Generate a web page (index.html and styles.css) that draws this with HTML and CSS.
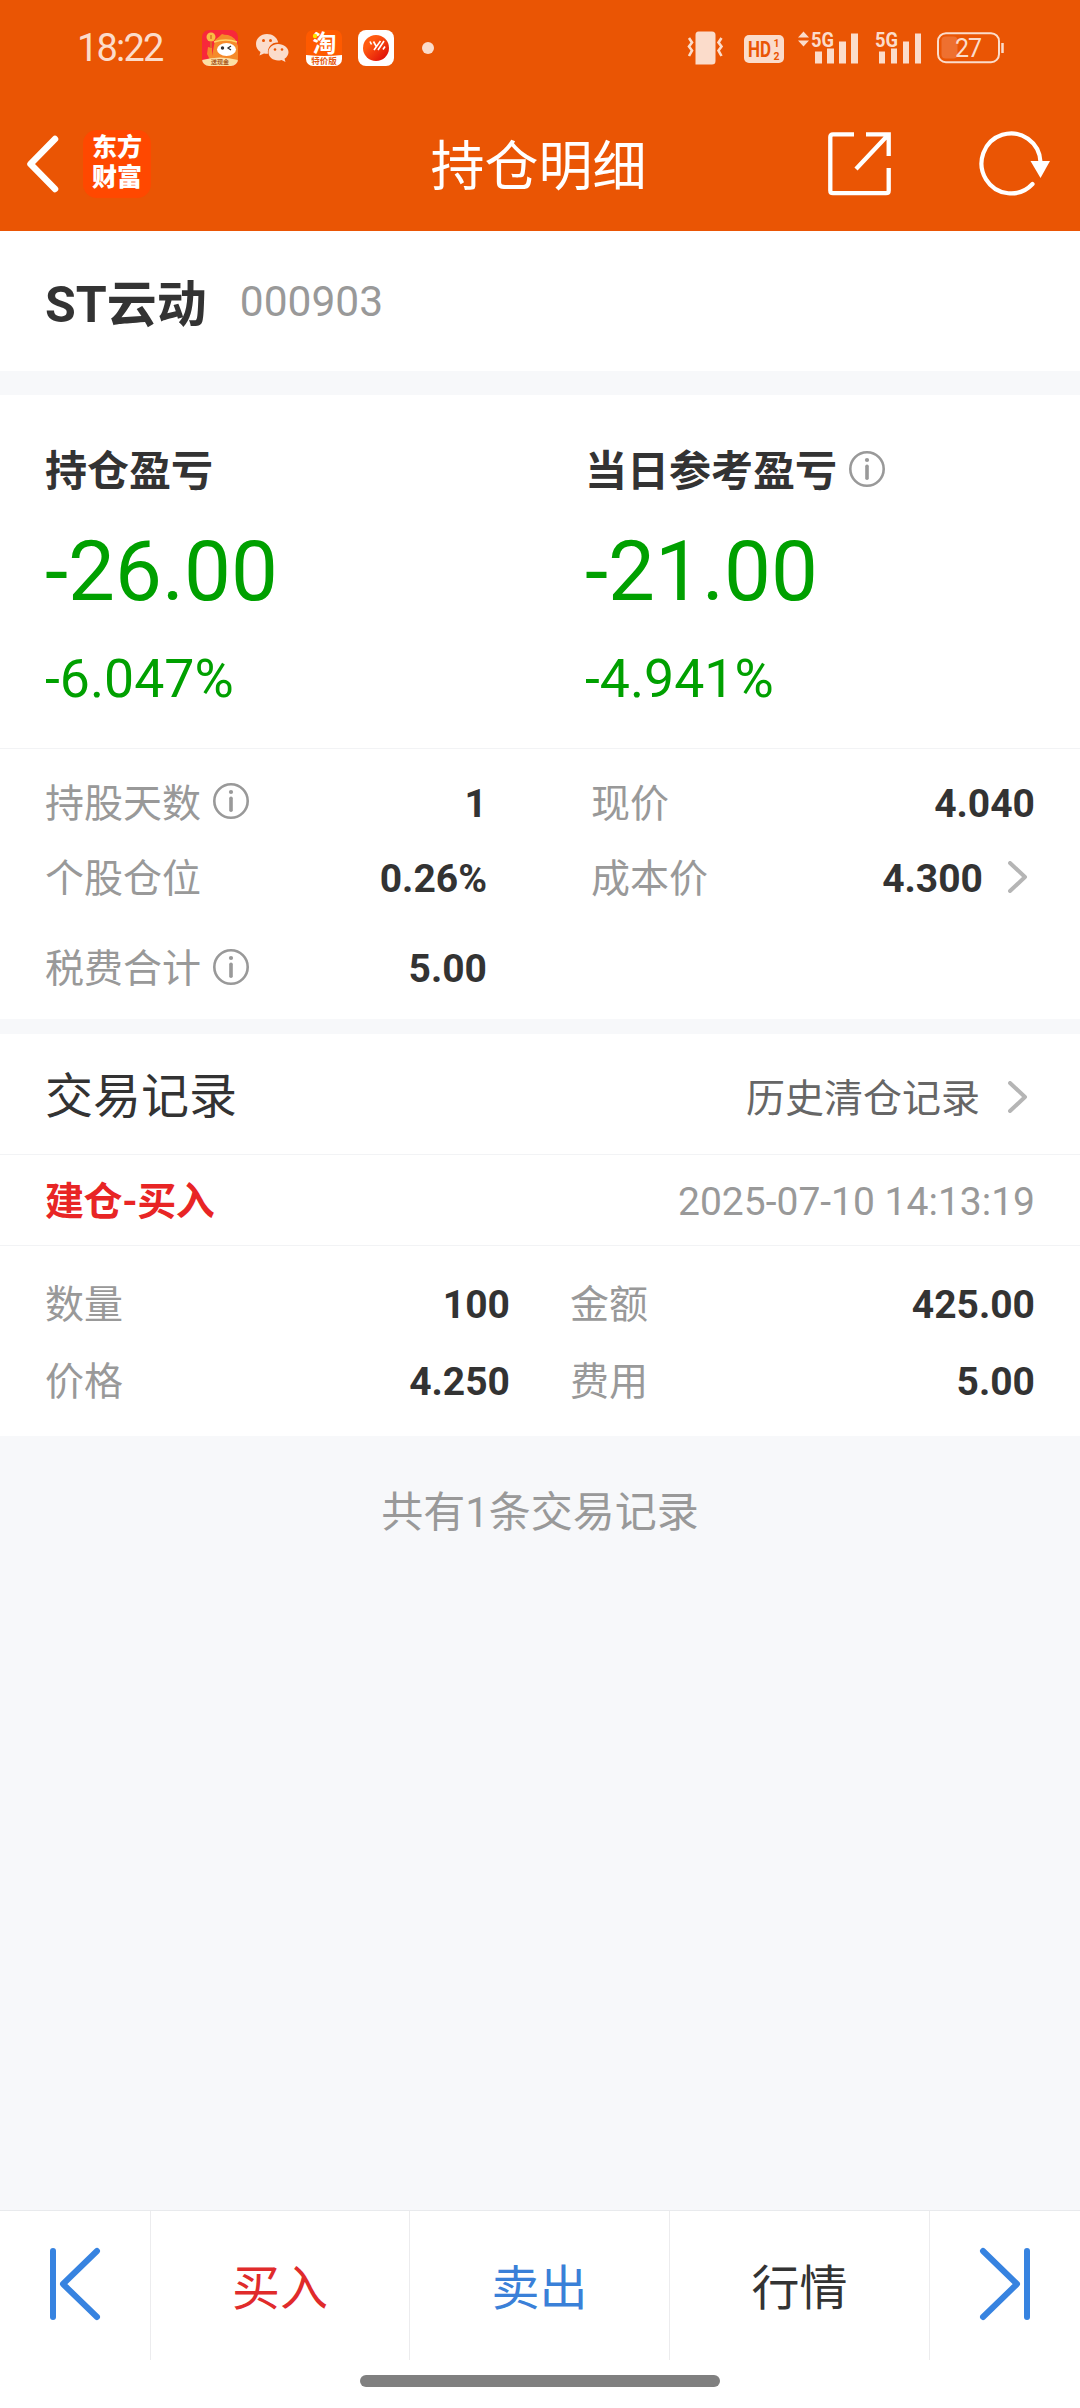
FILE: index.html
```html
<!DOCTYPE html>
<html lang="zh-CN">
<head>
    <meta charset="UTF-8">
    <meta name="viewport" content="width=device-width, initial-scale=1.0">
    <title>持仓明细</title>
    <link rel="stylesheet" href="styles.css">
</head>
<body>
    <!-- shared icons -->
    <svg class="sprite">
        <symbol id="info" viewBox="0 0 36 36">
            <circle cx="18" cy="18" r="16.7" fill="none" stroke="#999" stroke-width="2.6"/>
            <circle cx="18" cy="9" r="2.1" fill="#999"/>
            <path d="M18 15.2v12" stroke="#999" stroke-width="3.6" stroke-linecap="round"/>
        </symbol>
        <symbol id="arrow" viewBox="0 0 20 32">
            <path d="M2 2l15 14L2 30" fill="none" stroke="#b5b5b5" stroke-width="4" stroke-linecap="round" stroke-linejoin="round"/>
        </symbol>
    </svg>

    <div class="status-bar">
        <span class="time">18:22</span>
        <div class="notices">
            <svg width="36" height="36" viewBox="0 0 36 36">
                <defs><clipPath id="round"><rect width="36" height="36" rx="7"/></clipPath></defs>
                <g clip-path="url(#round)">
                    <rect width="36" height="36" fill="#f8283a"/>
                    <path d="M13 10q4-3 7-6q2 1 6 1q8 2 10 11v16H9l-4-8l1-7l4 1v8z" fill="#f58a2a"/>
                    <circle cx="9" cy="7" r="4.5" fill="#f8bd43"/>
                    <path d="M9 5v4M9 12v6" stroke="#d8742a" stroke-width="1.5"/>
                    <path d="M12 12q12-4 23 0" fill="none" stroke="#ffd36a" stroke-width="1.5"/>
                    <ellipse cx="24.5" cy="19.5" rx="9.5" ry="6.5" fill="#fff"/>
                    <circle cx="20.5" cy="18" r="1.7" fill="#333"/>
                    <path d="M29 16l-3 2l3 2" fill="none" stroke="#333" stroke-width="1.3"/>
                    <path d="M0 30q18-5 36 0v6H0z" fill="#fce0a4"/>
                    <text x="18" y="34" class="app-tiny">送现金</text>
                </g>
            </svg>
            <svg width="34" height="30" viewBox="0 0 34 30">
                <path d="M12 1C5.5 1 1 5.500 1 11c0 3.500 1.600 6 4.500 8L4.500 22.500L9 20.500q2 .5 4 .3C12 14 17 9 23.200 9.500C22 4 17.500 1 12 1z" fill="#fbdccb"/>
                <path d="M23 11c-5.500 0-9.500 3.700-9.500 8.300c0 5 4.500 8.200 9.500 8.200q2 0 3.500-.6l4 2l-1-3.200c2.500-1.700 4-3.900 4-6.500C33.500 14.700 29 11 23 11z" fill="#fbdccb"/>
                <g fill="#ea5504"><circle cx="8.5" cy="7.5" r="1.5"/><circle cx="15.5" cy="7.5" r="1.5"/><circle cx="20" cy="16.5" r="1.3"/><circle cx="27" cy="16.5" r="1.3"/></g>
            </svg>
            <svg width="36" height="36" viewBox="0 0 36 36">
                <g clip-path="url(#round)">
                    <rect width="36" height="36" fill="#ff5a00"/>
                    <text x="18.5" y="22" class="app-main">淘</text>
                    <circle cx="9" cy="6" r="2.2" fill="#ffe600"/>
                    <path d="M0 25q18 2 36 0v11H0z" fill="#fff"/>
                    <text x="18" y="34" class="app-sub">特价版</text>
                </g>
            </svg>
            <svg class="app-ball" width="36" height="36" viewBox="0 0 36 36">
                <defs><linearGradient id="ball" x1="0" y1="0" x2="1" y2="1"><stop offset=".3" stop-color="#ff5a10"/><stop offset="1" stop-color="#d90008"/></linearGradient></defs>
                <rect width="36" height="36" rx="8" fill="#fff"/>
                <circle cx="18" cy="18" r="13" fill="url(#ball)"/>
                <path d="M12 11.500l1.500 3M15.500 11.500l2.500 4.500M16 20l6.500-9M20 20l6-9M25 19.500l2-3" stroke="#fff" stroke-width="1.6"/>
            </svg>
            <span class="dot"></span>
        </div>
        <div class="signals">
            <svg width="37" height="34" viewBox="0 0 37 34">
                <path d="M11 .5h14q3.500 0 3.500 3.500v26q0 3.500-3.500 3.500H8.500V4q0-3.500 3-3.500z" fill="#fbdccb"/>
                <path d="M2 7l3 4.500L2 15.500l3 4L2 25M34.500 7l-3 4.500l3 4l-3 4l3 5.500" fill="none" stroke="#fbdccb" stroke-width="2.6"/>
            </svg>
            <svg class="hd" width="40" height="28" viewBox="0 0 40 28">
                <rect width="40" height="28" rx="5" fill="#fbdccb"/>
                <text x="4" y="21.5" class="hd-text" textLength="23" lengthAdjust="spacingAndGlyphs">HD</text>
                <text x="29.5" y="12.4" class="hd-num">1</text>
                <text x="29.5" y="24.6" class="hd-num">2</text>
            </svg>
            <svg class="net" width="62" height="34" viewBox="0 0 62 34">
                <path d="M0 6.500l5.500-6l5.500 6zM0 9.500h11l-5.500 6z" fill="#fbdccb"/>
                <text x="13" y="16" class="net-text" textLength="23" lengthAdjust="spacingAndGlyphs">5G</text>
                <path d="M17 20.500h7v12h-7zM29 17.500h7v15h-7zM41 10.500h7v22h-7zM53 2.500h7v30h-7z" fill="#fbdccb"/>
            </svg>
            <svg class="net2" width="47" height="34" viewBox="0 0 47 34">
                <text x="0" y="16" class="net-text" textLength="23" lengthAdjust="spacingAndGlyphs">5G</text>
                <path d="M4 20.500h6v12H4zM16 17.500h6v15h-6zM28 10.500h6v22h-6zM40 2.500h6v30h-6z" fill="#fbdccb"/>
            </svg>
            <svg class="battery" width="68" height="32" viewBox="0 0 68 32">
                <rect x="1" y="1.2" width="61" height="29" rx="8" fill="none" stroke="#fbdccb" stroke-width="2"/>
                <rect x="4.5" y="4.5" width="16" height="22" rx="4" fill="#ee7030"/>
                <path d="M65.500 11v10" stroke="#fbdccb" stroke-width="2.5"/>
                <text x="18" y="25" class="battery-text">27</text>
            </svg>
        </div>
    </div>

    <div class="header">
        <div class="header-left">
            <svg width="34" height="58" viewBox="0 0 34 58">
                <path d="M30 4L5.500 29L30 54" fill="none" stroke="#fff" stroke-width="6.5" stroke-linecap="round" stroke-linejoin="round"/>
            </svg>
            <div class="logo">东方<br>财富</div>
        </div>
        <h1>持仓明细</h1>
        <div class="header-right">
            <svg width="64" height="64" viewBox="0 0 64 64">
                <path d="M26 2.300H5q-2.700 0-2.700 2.700v53.500q0 2.700 2.700 2.700h53q2.700 0 2.700-2.700V36M38 2.300h22.700V24M60 3L28 37" fill="none" stroke="#fff" stroke-width="4.3"/>
            </svg>
            <svg width="72" height="66" viewBox="0 0 72 66">
                <path d="M61.500 31A29.500 30 0 1 0 53.500 53" fill="none" stroke="#fff" stroke-width="4.2" stroke-linecap="round"/>
                <path d="M51.500 30h19.500l-9.500 17z" fill="#fff"/>
            </svg>
        </div>
    </div>

    <div class="stock">
        <span class="stock-name">ST云动</span>
        <span class="stock-code">000903</span>
    </div>

    <div class="profit">
        <div class="profit-item">
            <div class="profit-title">持仓盈亏</div>
            <div class="profit-num">-26.00</div>
            <div class="profit-rate">-6.047%</div>
        </div>
        <div class="profit-item">
            <div class="profit-title">当日参考盈亏<svg class="info"><use href="#info"/></svg></div>
            <div class="profit-num">-21.00</div>
            <div class="profit-rate">-4.941%</div>
        </div>
    </div>

    <div class="details">
        <div class="cell"><span class="label">持股天数<svg class="info"><use href="#info"/></svg></span><b>1</b></div>
        <div class="cell"><span class="label">现价</span><b>4.040</b></div>
        <div class="cell"><span class="label">个股仓位</span><b>0.26%</b></div>
        <div class="cell"><span class="label">成本价</span><b class="push">4.300</b><svg class="arrow"><use href="#arrow"/></svg></div>
        <div class="cell"><span class="label">税费合计<svg class="info"><use href="#info"/></svg></span><b>5.00</b></div>
    </div>

    <div class="records-head">
        <h2>交易记录</h2>
        <span class="history">历史清仓记录</span>
        <svg class="arrow"><use href="#arrow"/></svg>
    </div>
    <div class="record-top">
        <span class="record-type">建仓-买入</span>
        <span class="record-time">2025-07-10 14:13:19</span>
    </div>
    <div class="record">
        <div class="cell"><span class="label">数量</span><b>100</b></div>
        <div class="cell"><span class="label">金额</span><b>425.00</b></div>
        <div class="cell"><span class="label">价格</span><b>4.250</b></div>
        <div class="cell"><span class="label">费用</span><b>5.00</b></div>
    </div>
    <p class="total">共有1条交易记录</p>

    <div class="footer">
        <div class="tabs">
            <a class="tab">
                <svg width="52" height="72" viewBox="0 0 52 72">
                    <path d="M4 3v66" class="nav-line"/>
                    <path d="M48 3L14 36l34 33" class="nav-line"/>
                </svg>
            </a>
            <a class="tab buy">买入</a>
            <a class="tab sell">卖出</a>
            <a class="tab">行情</a>
            <a class="tab">
                <svg width="52" height="72" viewBox="0 0 52 72">
                    <path d="M48 3v66" class="nav-line"/>
                    <path d="M4 3l34 33L4 69" class="nav-line"/>
                </svg>
            </a>
        </div>
        <div class="home-bar"></div>
    </div>
</body>
</html>
```

FILE: styles.css
```css
* {
    box-sizing: border-box;
}
body {
    margin: 0;
    height: 2408px;
    display: flex;
    flex-direction: column;
    background: #f7f8fa;
    color: #333;
    font-family: Roboto, "Noto Sans CJK SC", sans-serif;
    font-size: 39px;
    line-height: 46px;
    overflow: hidden;
}
svg {
    display: block;
    flex: none;
    overflow: visible;
}
.sprite {
    width: 0;
    height: 0;
    position: absolute;
}

/* status bar */
.status-bar {
    height: 96px;
    padding: 0 75px 0 77px;
    display: flex;
    align-items: center;
    background: #ea5504;
}
.time {
    width: 125px;
    color: #fbdccb;
    font-size: 38px;
    letter-spacing: -1.8px;
}
.notices {
    display: flex;
    align-items: center;
    gap: 17px;
}
.app-ball {
    margin-left: -1px;
}
.dot {
    width: 12px;
    height: 12px;
    margin-left: 11px;
    border-radius: 50%;
    background: #fbdccb;
}
.signals {
    margin-left: auto;
    display: flex;
    align-items: center;
}
.hd {
    margin-left: 20px;
    margin-top: 2px;
}
.net {
    margin-left: 14px;
}
.net2 {
    margin-left: 15px;
}
.battery {
    margin-left: 15px;
}
.app-tiny {
    font-size: 6px;
    font-weight: bold;
    fill: #a8581c;
    text-anchor: middle;
}
.app-main {
    font-size: 24px;
    font-weight: bold;
    fill: #fff;
    text-anchor: middle;
}
.app-sub {
    font-size: 8.5px;
    font-weight: bold;
    fill: #e65a10;
    text-anchor: middle;
}
.hd-text {
    font-size: 22px;
    font-weight: bold;
    fill: #ea5504;
}
.hd-num {
    font-size: 10.5px;
    font-weight: bold;
    fill: #ea5504;
}
.net-text {
    font-size: 20px;
    font-weight: bold;
    fill: #fbdccb;
}
.battery-text {
    font-size: 25px;
    letter-spacing: -1px;
    fill: #fbdccb;
}

/* header */
.header {
    height: 135px;
    display: flex;
    align-items: center;
    background: #ea5504;
    color: #fff;
}
.header-left,
.header-right {
    width: 270px;
    display: flex;
    align-items: center;
}
.header-left {
    padding-left: 25px;
    gap: 24px;
}
.header-right {
    padding-left: 18px;
    gap: 87px;
}
.header h1 {
    flex: 1;
    margin: 8px 3px 0 0;
    font-size: 54px;
    font-weight: normal;
    line-height: 64px;
    text-align: center;
}
.logo {
    width: 68px;
    height: 68px;
    padding-top: 3px;
    border-radius: 14px;
    background: #ff4800;
    font-size: 25px;
    font-weight: 900;
    line-height: 30px;
    text-align: center;
}

/* stock name */
.stock {
    height: 140px;
    padding: 2px 45px 0;
    display: flex;
    align-items: center;
    background: #fff;
}
.stock-name {
    font-size: 50px;
    font-weight: bold;
    line-height: 60px;
    padding-top: 5px;
}
.stock-code {
    margin-left: 33px;
    color: #999;
    font-size: 42.5px;
}

/* profit */
.profit {
    height: 354px;
    margin-top: 24px;
    padding: 45px 0 0 45px;
    display: grid;
    grid-template-columns: 540px 1fr;
    background: #fff;
    border-bottom: 1px solid #f2f3f5;
}
.profit-title {
    display: flex;
    align-items: center;
    font-size: 42px;
    font-weight: bold;
    line-height: 64px;
}
.info {
    width: 36px;
    height: 36px;
    margin: 0 0 7px 12px;
}
.profit-num,
.profit-rate {
    color: #00a000;
}
.profit-num {
    font-size: 83.5px;
    line-height: 136px;
}
.profit-rate {
    font-size: 53.6px;
    line-height: 77px;
}

/* details */
.details {
    height: 270px;
    padding: 17px 45px 0;
    display: grid;
    grid-template-columns: 442px 444px;
    grid-template-rows: 75px 75px 106px;
    column-gap: 104px;
    background: #fff;
}
.cell {
    display: flex;
    align-items: center;
    justify-content: space-between;
}
.label {
    display: flex;
    align-items: center;
    color: #999;
}
.label .info {
    margin-bottom: 5px;
}
.push {
    margin-left: auto;
}
.arrow {
    width: 20px;
    height: 32px;
    margin: 0 7px 4px 25px;
}

/* records */
.records-head,
.record-top {
    padding: 0 45px;
    display: flex;
    align-items: center;
    background: #fff;
    border-bottom: 1px solid #f2f3f5;
}
.records-head {
    height: 121px;
    margin-top: 15px;
    padding-top: 5px;
}
.records-head h2 {
    margin: 0 auto 0 0;
    font-size: 48px;
    font-weight: normal;
}
.history {
    padding-top: 5px;
    color: #666;
}
.records-head .arrow {
    margin: 0 7px 0 28px;
}
.record-top {
    height: 91px;
    padding-top: 3px;
    justify-content: space-between;
}
.record-type {
    color: #e82525;
    font-weight: bold;
    letter-spacing: -.4px;
}
.record-time {
    color: #999;
}
.record {
    height: 190px;
    padding: 20px 45px 0;
    display: grid;
    grid-template-columns: 465px 465px;
    grid-template-rows: 77px 77px;
    column-gap: 60px;
    background: #fff;
}
.total {
    margin: 45px 0 0;
    color: #999;
    font-size: 42px;
    line-height: 64px;
    text-align: center;
}

/* footer */
.footer {
    height: 198px;
    margin-top: auto;
    background: #fff;
    border-top: 1px solid #e8eaed;
}
.tabs {
    height: 149px;
    display: grid;
    grid-template-columns: 151px 259px 260px 260px 150px;
}
.tab {
    display: flex;
    align-items: center;
    justify-content: center;
    padding-top: 6px;
    font-size: 48px;
    border-right: 1px solid #ececee;
}
.tab:last-child {
    border-right: 0;
}
.tab svg {
    margin-bottom: 9px;
}
.buy {
    color: #e02b2b;
}
.sell {
    color: #3a80d8;
}
.nav-line {
    fill: none;
    stroke: #3783e0;
    stroke-width: 6px;
    stroke-linecap: round;
    stroke-linejoin: round;
}
.home-bar {
    width: 360px;
    height: 12px;
    margin: 15px auto 0;
    border-radius: 6px;
    background: #808080;
}
```
